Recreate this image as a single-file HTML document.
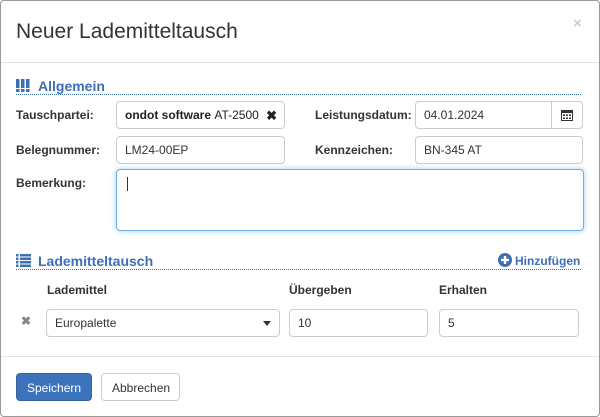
<!DOCTYPE html>
<html><head><meta charset="utf-8"><style>
*{box-sizing:border-box;margin:0;padding:0}
body{width:600px;height:417px;background:#fff;font-family:"Liberation Sans",Arial,sans-serif;font-size:12px;color:#333;position:relative;overflow:hidden}
.modal{position:absolute;left:0;top:0;width:600px;height:417px;border:1px solid #9a9a9a;border-radius:4px}
.a{position:absolute}
.title{left:15px;top:19px;font-size:21px;color:#333}
.close{left:572px;top:14px;font-size:15px;color:#ccc;font-weight:bold}
.hr{left:0;width:598px;height:1px;background:#e5e5e5}
.sec{color:#3d6fb6;font-weight:bold;font-size:14px}
.dot{height:0;border-top:1px dotted #3d6fb6}
.lbl{font-weight:bold;color:#333}
.inp{border:1px solid #ccc;border-radius:4px;height:28px;padding:6px 8px;background:#fff;color:#333}
.btn{border-radius:4px;height:28px;padding:7px 10px}
</style></head><body><div class="modal">
<div class="a title">Neuer Lademitteltausch</div>
<div class="a close">×</div>
<div class="a hr" style="top:61px"></div>

<svg class="a" style="left:15px;top:78px" width="14" height="13"><g fill="#3d6fb6"><rect x="0" y="0" width="3.5" height="9"/><rect x="5" y="0" width="3.5" height="9"/><rect x="10" y="0" width="3.5" height="9"/><rect x="0" y="10" width="3.5" height="3"/><rect x="5" y="10" width="3.5" height="3"/><rect x="10" y="10" width="3.5" height="3"/></g></svg>
<div class="a sec" style="left:37px;top:77px">Allgemein</div>
<div class="a dot" style="left:15px;top:93px;width:565px"></div>

<div class="a lbl" style="left:15px;top:107px">Tauschpartei:</div>
<div class="a inp" style="left:115px;top:100px;width:169px;font-weight:bold;color:#222">ondot software <span style="font-weight:normal">AT-2500</span><span style="position:absolute;right:7px;top:6px;font-size:13px">✖</span></div>
<div class="a lbl" style="left:314px;top:107px">Leistungsdatum:</div>
<div class="a inp" style="left:414px;top:100px;width:168px;">04.01.2024</div>
<div class="a" style="left:550px;top:100px;width:32px;height:28px;border:1px solid #ccc;border-radius:0 4px 4px 0;background:#fff"></div>
<svg class="a" style="left:560px;top:108px" width="12" height="12"><rect x="0.5" y="1.5" width="11" height="10" fill="none" stroke="#333"/><rect x="0" y="1" width="12" height="3" fill="#333"/><g fill="#333"><rect x="2" y="5.5" width="2" height="1.5"/><rect x="5" y="5.5" width="2" height="1.5"/><rect x="8" y="5.5" width="2" height="1.5"/><rect x="2" y="8.5" width="2" height="1.5"/><rect x="5" y="8.5" width="2" height="1.5"/><rect x="8" y="8.5" width="2" height="1.5"/></g></svg>

<div class="a lbl" style="left:15px;top:142px">Belegnummer:</div>
<div class="a inp" style="left:115px;top:135px;width:169px">LM24-00EP</div>
<div class="a lbl" style="left:314px;top:142px">Kennzeichen:</div>
<div class="a inp" style="left:414px;top:135px;width:168px">BN-345 AT</div>

<div class="a lbl" style="left:15px;top:175px">Bemerkung:</div>
<div class="a" style="left:115px;top:168px;width:468px;height:62px;border:1px solid #66afe9;border-radius:4px;box-shadow:0 0 6px rgba(102,175,233,.6)"><div style="position:absolute;left:10px;top:7px;width:1px;height:14px;background:#333"></div></div>

<svg class="a" style="left:15px;top:253px" width="15" height="13"><g fill="#3d6fb6"><rect x="0" y="0" width="2.5" height="2.5"/><rect x="4" y="0" width="11" height="2.5"/><rect x="0" y="3.5" width="2.5" height="2.5"/><rect x="4" y="3.5" width="11" height="2.5"/><rect x="0" y="7" width="2.5" height="2.5"/><rect x="4" y="7" width="11" height="2.5"/><rect x="0" y="10.5" width="2.5" height="2.5"/><rect x="4" y="10.5" width="11" height="2.5"/></g></svg>
<div class="a sec" style="left:37px;top:252px">Lademitteltausch</div>
<svg class="a" style="left:497px;top:252px" width="14" height="14"><circle cx="7" cy="7" r="7" fill="#3d6fb6"/><rect x="3" y="5.8" width="8" height="2.4" fill="#fff"/><rect x="5.8" y="3" width="2.4" height="8" fill="#fff"/></svg>
<div class="a" style="left:514px;top:253px;color:#3d6fb6;font-weight:bold;font-size:12px">Hinzufügen</div>
<div class="a dot" style="left:15px;top:268px;width:565px"></div>

<div class="a lbl" style="left:46px;top:282px">Lademittel</div>
<div class="a lbl" style="left:288px;top:282px">Übergeben</div>
<div class="a lbl" style="left:438px;top:282px">Erhalten</div>

<div class="a" style="left:20px;top:313px;color:#888;font-size:12px;font-weight:bold">✖</div>
<div class="a inp" style="left:45px;top:308px;width:234px">Europalette<span style="position:absolute;right:8px;top:11px;border-left:4px solid transparent;border-right:4px solid transparent;border-top:5px solid #333"></span></div>
<div class="a inp" style="left:288px;top:308px;width:139px">10</div>
<div class="a inp" style="left:438px;top:308px;width:140px">5</div>

<div class="a hr" style="top:355px"></div>
<div class="a btn" style="left:15px;top:372px;width:76px;background:#3d73bd;border:1px solid #35649f;color:#fff">Speichern</div>
<div class="a btn" style="left:100px;top:372px;width:79px;background:#fff;border:1px solid #ccc;color:#333">Abbrechen</div>
</div></body></html>
